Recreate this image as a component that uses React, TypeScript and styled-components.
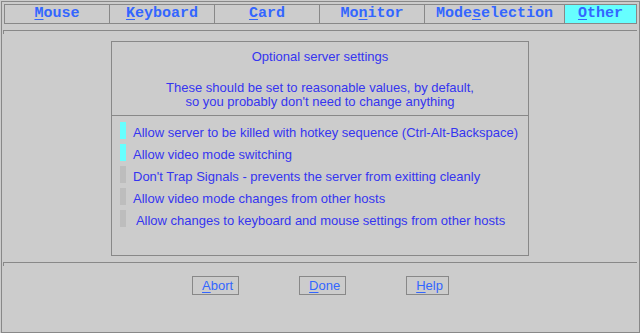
import React from "react";
import styled, { createGlobalStyle } from "styled-components";

const Global = createGlobalStyle`
  html, body {
    margin: 0;
    padding: 0;
    background: #cccccc;
  }
  body {
    font-family: "Liberation Sans", Arial, sans-serif;
  }
`;

const Frame = styled.div`
  box-sizing: border-box;
  margin: 1px 0 0 1px;
  width: 639px;
  height: 332px;
  border: 1px solid #888888;
  padding: 2px;
  display: flex;
  flex-direction: column;
  background: #cccccc;
`;

const TabBar = styled.div`
  box-sizing: border-box;
  height: 20px;
  border: 1px solid #888888;
  display: flex;
`;

const Tab = styled.div<{ $w?: number; $active?: boolean }>`
  box-sizing: border-box;
  ${(p) => (p.$w ? `width: ${p.$w}px;` : "flex: 1;")}
  height: 18px;
  border-right: ${(p) => (p.$w ? "1px solid #888888" : "none")};
  background: ${(p) => (p.$active ? "#66ffff" : "transparent")};
  font-family: "Liberation Mono", "Courier New", monospace;
  font-weight: bold;
  font-size: 15px;
  line-height: 18px;
  color: #3366ff;
  text-align: center;
  white-space: pre;
`;

const Key = styled.span`
  text-decoration: underline;
  text-decoration-thickness: 1px;
  text-underline-offset: 2px;
`;

const Rule = styled.div<{ $top: number }>`
  box-sizing: border-box;
  margin-top: ${(p) => p.$top}px;
  margin-left: -1px;
  height: 4px;
  border-top: 1px solid #888888;
  border-left: 1px solid #888888;
`;

const Panel = styled.div`
  box-sizing: border-box;
  margin-top: 7px;
  margin-left: 107px;
  align-self: flex-start;
  width: 418px;
  height: 215px;
  border: 1px solid #888888;
  display: flex;
  flex-direction: column;
  color: #3535f0;
  font-size: 13px;
`;

const Header = styled.div`
  padding: 7px 0 6px;
  border-bottom: 1px solid #888888;
  text-align: center;
`;

const Title = styled.div`
  line-height: 15px;
`;

const Note = styled.div`
  margin-top: 17px;
  line-height: 14px;
`;

const List = styled.div`
  display: flex;
  flex-direction: column;
  padding: 6px 0 0 8px;
`;

const Row = styled.div`
  display: flex;
  align-items: flex-start;
  height: 22px;
`;

const Indicator = styled.div<{ $on: boolean }>`
  width: 6px;
  height: 17px;
  flex: none;
  background: ${(p) => (p.$on ? "#66ffff" : "#bdbdbd")};
`;

const Label = styled.div`
  margin-left: 7px;
  line-height: 21px;
  white-space: pre;
`;

const ButtonRow = styled.div`
  margin-top: 10px;
  display: flex;
  justify-content: center;
  gap: 60px;
`;

const Button = styled.div`
  box-sizing: border-box;
  height: 19px;
  border: 1px solid #888888;
  padding: 0 5px 0 9px;
  font-size: 13px;
  line-height: 17px;
  color: #3366ff;
  white-space: pre;
`;

const tabs: { pre: string; key: string; post: string; w?: number; active?: boolean }[] = [
  { pre: "", key: "M", post: "ouse", w: 105 },
  { pre: "", key: "K", post: "eyboard", w: 105 },
  { pre: "", key: "C", post: "ard", w: 105 },
  { pre: "Mo", key: "n", post: "itor", w: 105 },
  { pre: "Mode", key: "s", post: "election", w: 140 },
  { pre: "", key: "O", post: "ther", active: true },
];

const options: { text: string; on: boolean }[] = [
  { text: "Allow server to be killed with hotkey sequence (Ctrl-Alt-Backspace)", on: true },
  { text: "Allow video mode switching", on: true },
  { text: "Don't Trap Signals - prevents the server from exitting cleanly", on: false },
  { text: "Allow video mode changes from other hosts", on: false },
  { text: " Allow changes to keyboard and mouse settings from other hosts", on: false },
];

const buttons = [
  { key: "A", post: "bort" },
  { key: "D", post: "one" },
  { key: "H", post: "elp" },
];

export default function App() {
  return (
    <>
      <Global />
      <Frame>
        <TabBar>
          {tabs.map((t) => (
            <Tab key={t.pre + t.key + t.post} $w={t.w} $active={t.active}>
              {t.pre}
              <Key>{t.key}</Key>
              {t.post}
            </Tab>
          ))}
        </TabBar>
        <Rule $top={6} />
        <Panel>
          <Header>
            <Title>Optional server settings</Title>
            <Note>
              These should be set to reasonable values, by default,
              <br />
              so you probably don't need to change anything
            </Note>
          </Header>
          <List>
            {options.map((o) => (
              <Row key={o.text}>
                <Indicator $on={o.on} />
                <Label>{o.text}</Label>
              </Row>
            ))}
          </List>
        </Panel>
        <Rule $top={6} />
        <ButtonRow>
          {buttons.map((b) => (
            <Button key={b.key}>
              <Key>{b.key}</Key>
              {b.post}
            </Button>
          ))}
        </ButtonRow>
      </Frame>
    </>
  );
}
